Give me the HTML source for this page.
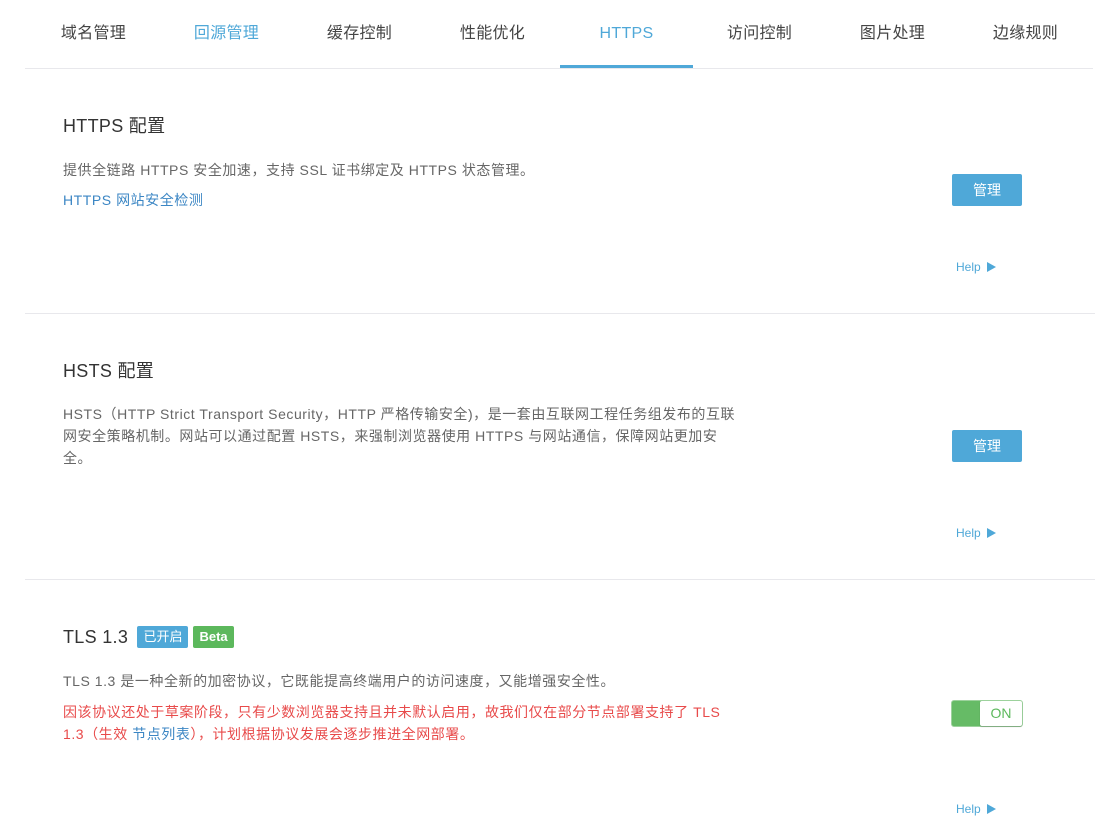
<!DOCTYPE html>
<html><head><meta charset="utf-8"><style>
*{margin:0;padding:0;box-sizing:border-box}
body{width:1120px;height:834px;background:#fff;font-family:"Liberation Sans","Noto Sans CJK SC",sans-serif;color:#555;position:relative;overflow:hidden}
.tab{position:absolute;top:23px;width:133px;text-align:center;font-size:16px;color:#444;line-height:22px;letter-spacing:0.3px}
.line{position:absolute;height:1px;background:#e8e8ec}
h2{position:absolute;font-size:18px;font-weight:normal;color:#333;line-height:24px;letter-spacing:0.3px}
.t{position:absolute;font-size:14px;color:#666;line-height:22px;letter-spacing:0.55px;white-space:nowrap}
.btn{position:absolute;left:952px;width:70px;height:32px;background:#4fa8d8;color:#fff;font-size:14px;text-align:center;line-height:32px;border-radius:2px}
.help{position:absolute;left:956px;font-size:12px;color:#4fa8d8;line-height:14px}
.help i{display:inline-block;width:0;height:0;border-left:9px solid #4fa8d8;border-top:5px solid transparent;border-bottom:5px solid transparent;margin-left:6px;vertical-align:-1px}
.badge{display:inline-block;font-size:13px;color:#fff;padding:0 6px;line-height:22px;border-radius:2px;vertical-align:2px;margin-left:4px;font-weight:bold;letter-spacing:0}
</style></head><body>
<div class="tab" style="left:27px">域名管理</div>
<div class="tab" style="left:160px;color:#4fa8d8">回源管理</div>
<div class="tab" style="left:293px">缓存控制</div>
<div class="tab" style="left:426px">性能优化</div>
<div class="tab" style="left:560px;color:#4fa8d8">HTTPS</div>
<div class="tab" style="left:693px">访问控制</div>
<div class="tab" style="left:826px">图片处理</div>
<div class="tab" style="left:959px">边缘规则</div>
<div class="line" style="left:25px;width:1068px;top:68px"></div>
<div style="position:absolute;left:560px;top:65px;width:133px;height:3px;background:#4fa8d8"></div>

<h2 style="left:63px;top:114px">HTTPS 配置</h2>
<div class="t" style="left:63px;top:159px">提供全链路 HTTPS 安全加速，支持 SSL 证书绑定及 HTTPS 状态管理。</div>
<div class="t" style="left:63px;top:189px;color:#3b86c4">HTTPS 网站安全检测</div>
<div class="btn" style="top:174px">管理</div>
<div class="help" style="top:260px">Help<i></i></div>
<div class="line" style="left:25px;width:1070px;top:313px"></div>

<h2 style="left:63px;top:359px">HSTS 配置</h2>
<div class="t" style="left:63px;top:403px">HSTS（HTTP Strict Transport Security，HTTP 严格传输安全)，是一套由互联网工程任务组发布的互联<br>网安全策略机制。网站可以通过配置 HSTS，来强制浏览器使用 HTTPS 与网站通信，保障网站更加安<br>全。</div>
<div class="btn" style="top:430px">管理</div>
<div class="help" style="top:526px">Help<i></i></div>
<div class="line" style="left:25px;width:1070px;top:579px"></div>

<h2 style="left:63px;top:625px">TLS 1.3 <span class="badge" style="background:#4fa8d8;font-weight:normal">已开启</span><span class="badge" style="background:#5cb85c;margin-left:5px">Beta</span></h2>
<div class="t" style="left:63px;top:670px">TLS 1.3 是一种全新的加密协议，它既能提高终端用户的访问速度，又能增强安全性。</div>
<div class="t" style="left:63px;top:701px;color:#e84a4a">因该协议还处于草案阶段，只有少数浏览器支持且并未默认启用，故我们仅在部分节点部署支持了 TLS<br>1.3（生效 <span style="color:#3b86c4">节点列表</span>），计划根据协议发展会逐步推进全网部署。</div>
<div style="position:absolute;left:951px;top:700px;width:72px;height:27px;background:#66bb66;border-radius:3px;border:1px solid #9dd29d">
<div style="position:absolute;left:28px;top:0;width:42px;height:25px;background:#fff;border-radius:2px;color:#5cb85c;font-size:14px;text-align:center;line-height:25px;box-shadow:0 1px 1px rgba(0,0,0,.2)">ON</div></div>
<div class="help" style="top:802px">Help<i></i></div>
</body></html>
